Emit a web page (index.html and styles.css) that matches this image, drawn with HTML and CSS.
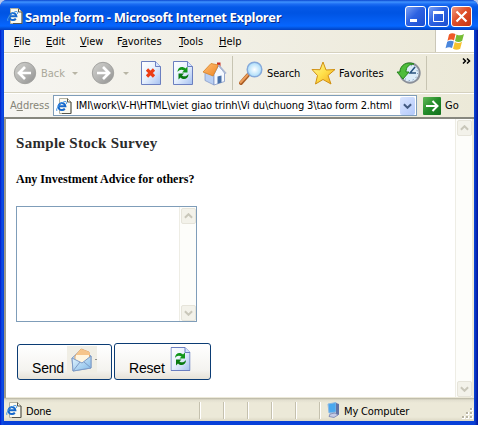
FILE: index.html
```html
<!DOCTYPE html>
<html lang="en">
<head>
<meta charset="utf-8">
<title>Sample form</title>
<link rel="stylesheet" href="styles.css">
</head>
<body>
<svg class="defs" width="0" height="0">
  <defs>
    <linearGradient id="gray" x2="1" y2="1"><stop stop-color="#d2d2ce"/><stop offset=".5" stop-color="#b5b5b3"/><stop offset="1" stop-color="#8f8f8e"/></linearGradient>
    <linearGradient id="paper" x2="1" y2="1"><stop stop-color="#fff"/><stop offset=".5" stop-color="#e6f0fd"/><stop offset="1" stop-color="#a5c0f0"/></linearGradient>
    <linearGradient id="gold" x2="1" y2="1"><stop stop-color="#fff8a0"/><stop offset=".5" stop-color="#ffe04a"/><stop offset="1" stop-color="#f3a51c"/></linearGradient>
    <linearGradient id="roof" x2="1" y2="1"><stop stop-color="#ffc078"/><stop offset="1" stop-color="#ef8420"/></linearGradient>
    <radialGradient id="lens"><stop stop-color="#fff"/><stop offset="1" stop-color="#a8dcfa"/></radialGradient>
    <linearGradient id="sky" x2="1" y2="1"><stop stop-color="#e8f8ff"/><stop offset="1" stop-color="#7fb8e8"/></linearGradient>
  </defs>
  <symbol id="ie" viewBox="0 0 16 16">
    <path d="M3.500.5h8l3.500 3.500v11.500h-11.500z" fill="#fbfaf0" stroke="#b4b2a0"/>
    <path d="M11.500.5V4H15v11.500H6" fill="none" stroke="#55554d"/>
    <path d="M8.800 10.600A3.500 3.500 0 1 1 9.400 8.300H3.500" fill="none" stroke="#1668cc" stroke-width="2"/>
    <path d="M1 13C-1 11 5 4 9 3.500c2 0 2 1 1.200 2.500" fill="none" stroke="#4a9ae8"/>
  </symbol>
  <symbol id="refresh" viewBox="0 0 20 24">
    <path d="M.5.5h14l5 5v18H.5z" fill="url(#paper)" stroke="#6b7fc0"/>
    <path d="M14.500.5v5h5" fill="#d5e4ff" stroke="#6b7fc0"/>
    <path d="M4.500 11c0-5 5-6.500 8-3.500l2-2V11.500H9l2-2C8.500 8 6.500 8.500 4.500 11z" fill="#11961b"/>
    <path d="M15.500 13c0 5-5 6.500-8 3.500l-2 2V12.500H11l-2 2c2.500 1.500 4.500 1 6.500-1.500z" fill="#087a12"/>
  </symbol>
  <symbol id="chev" viewBox="0 0 10 6"><path d="M1 1l4 4 4-4" fill="none" stroke="currentColor" stroke-width="2.200"/></symbol>
</svg>

<div class="window">
  <header class="title">
    <svg class="ico16" width="16" height="16"><use href="#ie"/></svg>
    <span class="title-text">Sample form - Microsoft Internet Explorer</span>
    <div class="controls">
      <span class="ctl"><svg width="19" height="19"><rect x="4" y="12" width="7" height="3" fill="#fff"/></svg></span>
      <span class="ctl"><svg width="19" height="19"><path d="M4.500 5v9.500h10V5" fill="none" stroke="#fff"/><path d="M4 5.500h11" stroke="#fff" stroke-width="3"/></svg></span>
      <span class="ctl close"><svg width="19" height="19"><path d="M4.500 4.500l10 10M14.500 4.500l-10 10" stroke="#fff" stroke-width="2.200"/></svg></span>
    </div>
  </header>

  <nav class="menu">
    <span class="m-file"><u>F</u>ile</span><span class="m-edit"><u>E</u>dit</span><span class="m-view"><u>V</u>iew</span><span class="m-fav">F<u>a</u>vorites</span><span class="m-tools"><u>T</u>ools</span><span class="m-help"><u>H</u>elp</span>
    <div class="flag">
      <svg width="20" height="19" viewBox="0 0 20 19">
        <path d="M4 2.500C6 .8 8 .8 10.500 2L9 8.500C7 7.200 5 7.300 2.500 8.800z" fill="#ee5a28"/>
        <path d="M11.500 2.500c2.500 1.200 5 1.200 7.500-.5l-1.800 6.800c-2.300 1.600-4.700 1.500-7.200.3z" fill="#76bd36"/>
        <path d="M2.200 9.800C4.500 8.300 6.500 8.300 8.800 9.500L7 16C5 14.800 3 14.800.5 16.300z" fill="#4a86dc"/>
        <path d="M9.800 10.100c2.500 1.200 4.700 1.200 7.200-.3l-1.800 6.900c-2.400 1.500-4.700 1.400-7.200.1z" fill="#f7c22e"/>
      </svg>
    </div>
  </nav>

  <div class="tools">
    <svg class="back" width="24" height="24"><circle cx="12" cy="12" r="10.700" fill="url(#gray)" stroke="#a2a29f"/><path d="M18 12H7M12 6l-6 6 6 6" fill="none" stroke="#fff" stroke-width="2.700"/></svg>
    <span class="back-text">Back</span>
    <i class="drop d1"></i>
    <svg class="fwd" width="24" height="24"><circle cx="12" cy="12" r="10.700" fill="url(#gray)" stroke="#a2a29f"/><path d="M6 12h11M12 6l6 6-6 6" fill="none" stroke="#fff" stroke-width="2.700"/></svg>
    <i class="drop d2"></i>
    <svg class="stop" width="20" height="24"><path d="M.5.5h14l5 5v18H.5z" fill="url(#paper)" stroke="#6b7fc0"/><path d="M14.500.5v5h5" fill="#d5e4ff" stroke="#6b7fc0"/><path d="M6 8.500l7 7M13 8.500l-7 7" stroke="#ec3c14" stroke-width="3.200"/></svg>
    <svg class="reload" width="20" height="24"><use href="#refresh"/></svg>
    <svg class="home" width="25" height="25" viewBox="0 0 25 25">
      <path d="M15 1.500h3.500V8H15z" fill="#c93023"/>
      <path d="M3 11l9 3.500V24l-9-4.500z" fill="#b9cff2" stroke="#7d93c4" stroke-width=".7"/>
      <path d="M12 13.500L16.500 4.500 22.500 12v8.500L12 24z" fill="#f5f9ff" stroke="#8095c5" stroke-width=".8"/>
      <path d="M1 11L9 2.500l7.500 1.500L11 15z" fill="url(#roof)" stroke="#d68224" stroke-width=".8"/>
      <path d="M16.500 4l7.500 8.500" stroke="#a9b6d2" stroke-width="1.600"/>
      <path d="M15.500 15.500l4-1v7l-4 1.200z" fill="#4870a8"/>
    </svg>
    <i class="sep s1"></i>
    <svg class="search" width="24" height="24"><path d="M9 14l-7 8" stroke="#a85b24" stroke-width="4" stroke-linecap="round"/><path d="M8.500 14l-7 7.500" stroke="#ed9e5a" stroke-width="2" stroke-linecap="round"/><circle cx="15.500" cy="8.500" r="7.300" fill="url(#lens)" stroke="#86a9da" stroke-width="1.500"/></svg>
    <span class="search-text">Search</span>
    <svg class="star" width="25" height="25"><path d="M12 1l3 8 9-.5-7 6L20 23l-8-4.500L4.500 23l2-8.500L1 8.500l8 .2z" fill="url(#gold)" stroke="#d09012"/></svg>
    <span class="fav-text">Favorites</span>
    <svg class="history" width="25" height="24"><circle cx="14" cy="12" r="9.700" fill="#dcecf9" stroke="#8b9099" stroke-width="2"/><circle cx="14" cy="12" r="7.500" fill="none" stroke="#6483a5" stroke-dasharray="1 3"/><path d="M1 11h3C4 4 11 0 18 3c-5 0-8 3-8 8h3l-6 7z" fill="#4ebc3b" stroke="#26841c"/><path d="M19 6l-5 6h6" fill="none" stroke="#28537f" stroke-width="1.500"/></svg>
    <i class="sep s2"></i>
    <svg class="more" width="9" height="6"><path d="M1 .5l2.500 2.500L1 5.500M5 .5l2.500 2.500L5 5.500" fill="none" stroke="#000" stroke-width="1.500"/></svg>
  </div>

  <div class="address">
    <span class="addr-label">A<u>d</u>dress</span>
    <div class="addr-box">
      <svg width="16" height="16"><use href="#ie"/></svg>
      <span class="addr-text">IMI\work\V-H\HTML\viet giao trinh\Vi du\chuong 3\tao form 2.html</span>
      <span class="addr-drop"><svg width="9" height="6"><use href="#chev"/></svg></span>
    </div>
    <span class="go"><svg width="18" height="18"><path d="M3 9h11M9.500 4l5 5-5 5" fill="none" stroke="#fff" stroke-width="2"/></svg></span>
    <span class="go-text">Go</span>
  </div>

  <main class="view">
    <form class="page">
      <h1><span>Sample Stock Survey</span></h1>
      <h2><span>Any Investment Advice for others?</span></h2>
      <div class="area">
        <div class="scroll"><b class="up"><svg width="9" height="6"><use href="#chev"/></svg></b><b><svg width="9" height="6"><use href="#chev"/></svg></b></div>
      </div>
      <div class="buttons">
        <div class="btn send"><span>Send</span>
          <svg width="30" height="27"><path d="M0 0h30v27H0z" fill="#f0eee5"/><path d="M5 12L15 3l9 7v12L6 25z" fill="#b5d5f2" stroke="#8aa3ca"/><path d="M8 10l6-7 8 3 1 7-8 5-7-3z" fill="#fff5df" stroke="#dfa66a"/><path d="M9 9l5-6 8 3 1 3z" fill="#f6c58a"/><path d="M5 12l10 5 9-7v12L6 25z" fill="url(#sky)" stroke="#7e9bc6"/><path d="M6 25l7-9M24 22l-7-6" stroke="#7e9bc6"/><path d="M28.500 13h1v1h-1z" fill="#333"/></svg>
        </div>
        <div class="btn reset"><span>Reset</span>
          <svg width="21" height="24" viewBox="0 0 20 24"><use href="#refresh"/></svg>
        </div>
      </div>
    </form>
    <div class="scroll page-scroll"><b class="up"><svg width="9" height="6"><use href="#chev"/></svg></b><b><svg width="9" height="6"><use href="#chev"/></svg></b></div>
  </main>

  <footer class="status">
    <div class="done"><svg width="16" height="16"><use href="#ie"/></svg><span class="done-text">Done</span></div>
    <i></i><i></i><i></i><i></i><i></i>
    <div class="zone">
      <svg width="13" height="16"><path d="M1 2l8-1.500V10L2 11z" fill="#4aa8ee" stroke="#8cb8e2"/><path d="M9 1l3 1v11l-3-1z" fill="#6272a4"/><path d="M3 12l5-1 3 2-4 2.500-5-1z" fill="#c6cbe5" stroke="#6876a9" stroke-width=".7"/></svg>
      <span class="zone-text">My Computer</span>
    </div>
    <svg class="grip" width="12" height="12"><path d="M8 0h3v3H8zM4 4h3v3H4zM8 4h3v3H8zM0 8h3v3H0zM4 8h3v3H4zM8 8h3v3H8z" fill="#fff"/><path d="M8 0h2v2H8zM4 4h2v2H4zM8 4h2v2H8zM0 8h2v2H0zM4 8h2v2H4zM8 8h2v2H8z" fill="#b8b4a3"/></svg>
  </footer>
</div>
</body>
</html>
```

FILE: styles.css
```css
* { box-sizing: border-box; }
body { margin: 0; background: #b8c8ec; font: 11px/14px "DejaVu Sans Condensed", "DejaVu Sans", sans-serif; color: #000; overflow: hidden; }
svg { display: block; flex: none; }
span { white-space: nowrap; }
.defs { position: absolute; }
u { text-underline-offset: 1px; text-decoration-thickness: 1px; }
.window {
  width: 478px; height: 425px; display: flex; flex-direction: column;
  padding: 0 4px 4px; border-radius: 7px 7px 0 0; overflow: hidden;
  background: linear-gradient(90deg, #0019c8 0, #0d4ee8 2px, #0840d8 4px, #0840d8 474px, #0a3cc8 475px, #00139b 478px);
}
.title {
  height: 30px; flex: none; margin: 0 -4px; padding: 2px 6px 0 7px; display: flex; align-items: center;
  background: linear-gradient(#0a46d0 0, #3f93ff 2px, #1d6df3 4px, #0559e8 7px, #0054e3 13px, #0560f5 22px, #0566ff 26px, #0354de 28px, #0140c2 30px);
}
.title-text { margin-left: 2px; padding-top: 1px; font: bold 13px/16px "Open Sans", sans-serif; color: #fff; text-shadow: 1px 1px #0b2b83; letter-spacing: -.36px; }
.controls { display: flex; gap: 2px; margin-left: auto; }
.ctl { width: 21px; height: 21px; border: 1px solid #fff; border-radius: 3px; background: linear-gradient(135deg, #7aa0f4, #2d62e2 45%, #1c4fd0); }
.close { background: linear-gradient(135deg, #f09a80, #df4e28 45%, #c43414); }
.menu { height: 23px; flex: none; display: flex; align-items: center; padding-left: 10px; background: linear-gradient(90deg, #f6f5f1, #f1efe5 50%, #ece9d8); border-bottom: 1px solid #d5d1bf; }
.menu span { padding-top: 2px; }
.m-file { width: 32px; } .m-edit { width: 34px; } .m-view { width: 37px; } .m-fav { width: 62px; } .m-tools { width: 40px; }
.flag { margin-left: auto; width: 39px; height: 22px; background: #fff; border-left: 1px solid #cbc7b8; display: flex; align-items: center; justify-content: center; }
.tools { height: 40px; flex: none; display: flex; align-items: center; padding-left: 9px; background: linear-gradient(90deg, #f6f5f1, #f1efe5 50%, #ece9d8); border-top: 1px solid #fff; border-bottom: 1px solid #d5d1bf; }
.tools span { padding-top: 2px; }
.back-text { margin-left: 4px; width: 32px; color: #aaa89a; }
.drop { border: 3px solid transparent; border-top-color: #b8b5a5; border-bottom: 0; flex: none; }
.d1 { margin-right: 12px; margin-left: -1px; }
.fwd { margin-left: 1px; }
.d2 { margin-left: 8px; margin-right: 12px; }
.reload { margin-left: 12px; }
.home { margin-left: 9px; }
.sep { width: 1px; height: 34px; background: #c7c4b2; flex: none; }
.s1 { margin: 0 6px 0 5px; }
.search-text { margin-left: 4px; width: 44px; letter-spacing: -.15px; }
.fav-text { margin-left: 3px; width: 57px; }
.s2 { margin: 0 35px 0 5px; }
.more { align-self: flex-start; margin-top: 4px; }
.address { height: 24px; flex: none; display: flex; align-items: center; padding-left: 6px; background: linear-gradient(90deg, #f6f5f1, #f1efe5 50%, #ece9d8); border-top: 1px solid #fff; }
.addr-label { width: 43px; color: #858477; }
.addr-box { width: 364px; height: 21px; border: 1px solid #7f9db9; background: #fff; display: flex; align-items: center; padding: 0 1px 0 2px; }
.addr-text { margin-left: 4px; width: 325px; padding-top: 1px; letter-spacing: -.125px; }
.addr-drop { width: 15px; height: 18px; border-radius: 2px; background: linear-gradient(135deg, #dbe6ff, #b3c9fa); color: #445b82; display: grid; place-items: center; }
.go { margin-left: 6px; width: 18px; height: 18px; border-radius: 1px; background: linear-gradient(135deg, #62b957, #238b29 50%, #12701c); }
.go-text { margin-left: 4px; }
.view { height: 281px; flex: none; display: flex; background: #fff; border: solid #716f64; border-width: 2px 0 0 2px; border-top-color: #87877e; border-left-color: #9c9a8c; box-shadow: inset -2px -1px #ece9d8; padding: 0 2px 1px 0; }
.page { flex: 1; padding: 15px 0 0 10px; }
h1, h2 { font-family: "Liberation Serif", serif; margin: 0; font-weight: bold; }
h1 { font-size: 15px; line-height: 18px; letter-spacing: .3px; color: #2b2b2b; }
h2 { font-size: 12px; line-height: 16px; margin-top: 19px; }
.area { margin-top: 19px; width: 181px; height: 116px; border: 1px solid #7f9db9; display: flex; justify-content: flex-end; }
.scroll { width: 17px; display: flex; flex-direction: column; justify-content: space-between; background: #fdfdfa; border-left: 1px solid #eeede5; padding: 1px 0 0 1px; }
.scroll b { width: 15px; height: 16px; border: 1px solid #e6e4da; border-radius: 2px; background: #f3f2ea; display: grid; place-items: center; color: #c9c7ba; }
.up svg { transform: rotate(180deg); }
.page-scroll { width: 17px; }
.buttons { display: flex; align-items: flex-end; gap: 2px; margin: 21px 0 0 1px; }
.btn { border: 1px solid #0b3c74; border-radius: 3px; background: linear-gradient(#fff, #f4f3ef 75%, #e6e2d8); display: flex; font: 14px/16px "Liberation Sans", sans-serif; letter-spacing: -.2px; }
.btn span { align-self: flex-end; }
.send { width: 95px; height: 36px; padding: 1px 0 3px 14px; }
.send svg { margin-left: 3px; }
.reset { width: 97px; height: 37px; padding: 3px 0 3px 14px; }
.reset svg { margin-left: 5px; }
.status { height: 23px; flex: none; display: flex; align-items: center; background: linear-gradient(#b5b2a0 0, #e2dfcf 2px, #ece9d8 5px, #ece9d8 19px, #dcd8c5); padding: 1px 0 0 2px; }
.done { width: 193px; display: flex; align-items: center; }
.done-text { margin-left: 4px; padding-top: 3px; letter-spacing: -.2px; }
.status i { width: 24px; height: 17px; border-left: 1px solid #c5c1ae; box-shadow: inset 1px 0 #fff; }
.zone { flex: 1; height: 17px; display: flex; align-items: center; border-left: 1px solid #c5c1ae; box-shadow: inset 1px 0 #fff; padding-left: 7px; }
.zone-text { margin-left: 4px; padding-top: 3px; letter-spacing: -.15px; }
.grip { align-self: flex-end; margin: 0 0 1px; }
```
